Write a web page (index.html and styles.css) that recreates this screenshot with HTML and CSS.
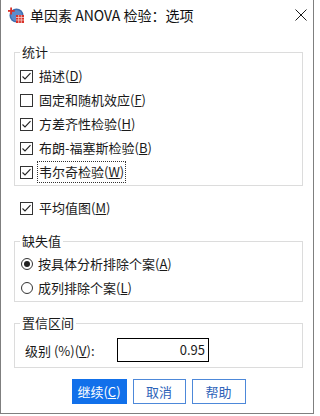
FILE: index.html
```html
<!DOCTYPE html>
<html lang="zh-CN">
<head>
<meta charset="utf-8">
<title>单因素 ANOVA 检验：选项</title>
<link rel="stylesheet" href="styles.css">
</head>
<body>
<div class="window">
  <div class="titlebar">
    <svg class="app-icon" width="16" height="16" viewBox="0 0 16 16">
      <circle cx="8.5" cy="8.5" r="7" fill="#3f6fb0"/>
      <circle cx="8.5" cy="8.5" r="5.5" fill="#5b8bcc"/>
      <rect x="2.2" y="0.5" width="1.8" height="7" fill="#d8322a"/>
      <rect x="-0.3" y="3" width="7" height="1.8" fill="#d8322a"/>
      <rect x="8" y="8" width="8" height="8" fill="#d8322a"/>
      <path d="M8 10.5H16M8 13H16M10.7 8V16M13.3 8V16" stroke="#f6d0cc" stroke-width="0.8"/>
    </svg>
    <span class="title">单因素 ANOVA 检验：选项</span>
    <svg class="close" width="12" height="12" viewBox="0 0 12 12">
      <path d="M0.5 0.5L11.5 11.5M11.5 0.5L0.5 11.5" stroke="#1a1a1a" stroke-width="1"/>
    </svg>
  </div>
  <div class="content">
    <fieldset class="group group-stats">
      <legend>统计</legend>
      <div class="row"><span class="cb"><svg viewBox="0 0 11 11"><polyline points="1.5,5.5 4,8 9.5,2.2"/></svg></span><span class="lbl">描述(<u>D</u>)</span></div>
      <div class="row"><span class="cb"></span><span class="lbl">固定和随机效应(<u>F</u>)</span></div>
      <div class="row"><span class="cb"><svg viewBox="0 0 11 11"><polyline points="1.5,5.5 4,8 9.5,2.2"/></svg></span><span class="lbl">方差齐性检验(<u>H</u>)</span></div>
      <div class="row"><span class="cb"><svg viewBox="0 0 11 11"><polyline points="1.5,5.5 4,8 9.5,2.2"/></svg></span><span class="lbl">布朗-福塞斯检验(<u>B</u>)</span></div>
      <div class="row"><span class="cb"><svg viewBox="0 0 11 11"><polyline points="1.5,5.5 4,8 9.5,2.2"/></svg></span><span class="lbl focus">韦尔奇检验(<u>W</u>)</span></div>
    </fieldset>
    <div class="row standalone"><span class="cb"><svg viewBox="0 0 11 11"><polyline points="1.5,5.5 4,8 9.5,2.2"/></svg></span><span class="lbl">平均值图(<u>M</u>)</span></div>
    <fieldset class="group group-missing">
      <legend>缺失值</legend>
      <div class="row"><span class="radio on"></span><span class="lbl">按具体分析排除个案(<u>A</u>)</span></div>
      <div class="row"><span class="radio"></span><span class="lbl">成列排除个案(<u>L</u>)</span></div>
    </fieldset>
    <fieldset class="group group-ci">
      <legend>置信区间</legend>
      <div class="ci-row"><span class="ci-label">级别 (%)(<u>V</u>):</span><div class="input">0.95</div></div>
    </fieldset>
    <div class="buttons">
      <div class="btn primary">继续(<u>C</u>)</div>
      <div class="btn w53">取消</div>
      <div class="btn w54">帮助</div>
    </div>
  </div>
</div>
</body>
</html>
```
FILE: styles.css
```css
body {
  margin: 0;
  background: #ffffff;
  font-family: "Noto Sans CJK SC", "Noto Sans", sans-serif;
  font-size: 13px;
  color: #1a1a1a;
}

.window {
  width: 314px;
  height: 414px;
  box-sizing: border-box;
  border: 1px solid #7f7f7f;
  border-top: none;
  background: #ffffff;
}

.titlebar {
  height: 30px;
  display: flex;
  align-items: center;
  padding-left: 7px;
}

.app-icon {
  flex: none;
  margin-right: 6px;
}

.title {
  font-size: 14px;
  line-height: 16px;
  color: #111;
}

.close {
  margin-left: auto;
  margin-right: 6px;
}

.content {
  padding: 14px 10px 0 13px;
}

.group {
  margin: 0;
  padding: 4px 0 1px 5px;
  border: 1px solid #dcdcdc;
  min-width: 0;
}

.group legend {
  padding: 0 2px;
  line-height: 16px;
  color: #1a1a1a;
}

.group-missing {
  margin-top: 13px;
  padding-top: 3px;
}

.group-ci {
  margin-top: 13px;
  padding-top: 7px;
  padding-bottom: 5px;
}

.row {
  display: flex;
  align-items: center;
  height: 24px;
}

.standalone {
  margin-top: 10px;
  padding-left: 6px;
}

.cb {
  flex: none;
  width: 13px;
  height: 13px;
  box-sizing: border-box;
  border: 1px solid #333;
  margin-right: 6px;
  display: flex;
}

.cb svg {
  width: 11px;
  height: 11px;
}

.cb polyline {
  fill: none;
  stroke: #222;
  stroke-width: 1.1;
}

.radio {
  flex: none;
  width: 12px;
  height: 12px;
  box-sizing: border-box;
  border: 1px solid #333;
  border-radius: 50%;
  margin: 0 5px 0 1px;
  display: flex;
  align-items: center;
  justify-content: center;
}

.radio.on::after {
  content: "";
  width: 6px;
  height: 6px;
  border-radius: 50%;
  background: #222;
}

.lbl {
  line-height: 20px;
  white-space: nowrap;
}

.lbl.focus {
  border: 1px dotted #333;
  padding: 0 1px;
  margin-left: -2px;
}

u {
  text-decoration: underline;
  text-underline-offset: 1px;
}

.ci-row {
  display: flex;
  align-items: center;
  padding-left: 5px;
}

.ci-label {
  width: 92px;
  flex: none;
  white-space: nowrap;
}

.input {
  width: 92px;
  height: 24px;
  box-sizing: border-box;
  border: 1px solid #000;
  text-align: right;
  padding-right: 3px;
  line-height: 22px;
}

.buttons {
  margin-top: 11px;
  display: flex;
  justify-content: center;
  gap: 6px;
}

.btn {
  width: 53px;
  height: 25px;
  box-sizing: border-box;
  border: 1px solid #4d88d9;
  color: #2d62b8;
  text-align: center;
  line-height: 23px;
}

.btn.primary {
  width: 55px;
  background: #1170ea;
  border-color: #1170ea;
  color: #ffffff;
}

.btn.w54 {
  width: 54px;
}
```
